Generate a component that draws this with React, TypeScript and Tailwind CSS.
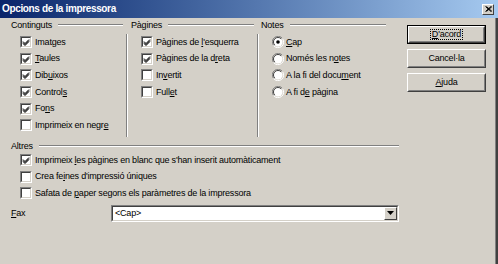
import type { ReactNode } from 'react';

const U = ({ children }: { children: ReactNode }) => <span className="underline underline-offset-[1px]">{children}</span>;

function Box({ checked }: { checked?: boolean }) {
  return (
    <span className="w-[12px] h-[12px] shrink-0 border border-t-[#808080] border-l-[#808080] border-b-white border-r-white">
      <span className="block w-full h-full bg-white border border-t-[#404040] border-l-[#404040] border-b-[#d4d0c8] border-r-[#d4d0c8]">
        {checked && (
          <svg viewBox="0 0 8 8" className="w-[8px] h-[8px]">
            <path d="M1 3.5 L3 5.5 L7 1.5 M1 4.5 L3 6.5 L7 2.5 M1 5.5 L3 7.5 L7 3.5" stroke="#000" strokeWidth="1" fill="none" />
          </svg>
        )}
      </span>
    </span>
  );
}

function Radio({ checked }: { checked?: boolean }) {
  return (
    <svg viewBox="0 0 12 12" className="w-[12px] h-[12px] shrink-0">
      <path d="M10.5 2.5 A5.5 5.5 0 0 0 1.5 9.5" stroke="#808080" fill="none" />
      <path d="M1.5 9.5 A5.5 5.5 0 0 0 10.5 2.5" stroke="#ffffff" fill="none" />
      <circle cx="6" cy="6" r="4.5" fill="#fff" />
      <path d="M9.2 2.8 A4.5 4.5 0 0 0 2.8 9.2" stroke="#404040" fill="none" />
      {checked && <circle cx="6" cy="6" r="1.8" fill="#000" />}
    </svg>
  );
}

function Check({ checked, children }: { checked?: boolean; children: ReactNode }) {
  return (
    <div className="h-[16.6px] flex items-center gap-[3px]">
      <Box checked={checked} />
      <span>{children}</span>
    </div>
  );
}

function Opt({ checked, children }: { checked?: boolean; children: ReactNode }) {
  return (
    <div className="h-[16.6px] flex items-center gap-[2px]">
      <Radio checked={checked} />
      <span>{children}</span>
    </div>
  );
}

function Header({ label }: { label: string }) {
  return (
    <div className="h-[12px] flex items-center gap-[6px]">
      <span>{label}</span>
      <span className="flex-1 h-[2px] border-t border-t-[#808080] border-b border-b-white" />
    </div>
  );
}

function Btn({ children, focus }: { children: ReactNode; focus?: boolean }) {
  return (
    <div className={`w-[79px] h-[19px] ${focus ? 'border border-black' : ''}`}>
      <div className="w-full h-full border border-t-white border-l-white border-b-[#404040] border-r-[#404040] bg-[#d4d0c8]">
        <div className="w-full h-full border border-t-[#d4d0c8] border-l-[#d4d0c8] border-b-[#808080] border-r-[#808080] flex items-center justify-center">
          <span className={focus ? 'outline outline-1 outline-dotted outline-black px-[1px]' : ''}>{children}</span>
        </div>
      </div>
    </div>
  );
}

export default function App() {
  return (
    <div className="w-[498px] h-[264px] bg-[#d4d0c8] flex flex-col overflow-hidden text-[9px] tracking-[-0.2px] text-black font-['Liberation_Sans',Arial,sans-serif] leading-none">
      <div className="h-[18px] shrink-0 bg-gradient-to-r from-[#0a246a] to-[#a6caf0] flex items-center pl-[2px] pr-[4px]">
        <span className="text-white font-bold text-[10px] tracking-[-0.35px]">Opcions de la impressora</span>
        <div className="ml-auto w-[12px] h-[11px] bg-[#d4d0c8] border border-t-white border-l-white border-b-[#404040] border-r-[#404040] flex items-center justify-center">
          <svg viewBox="0 0 7 6" className="w-[7px] h-[6px]">
            <path d="M0.5 0.5 L6 5.5 M1.5 0.5 L7 5.5 M6 0.5 L0.5 5.5 M7 0.5 L1.5 5.5" stroke="#000" strokeWidth="1" />
          </svg>
        </div>
      </div>

      <div className="flex-1 flex border-r-[2px] border-r-[#404040] shadow-[inset_-1px_0_0_#808080]">
        <div className="w-[399px] pt-[1px]">
          <div className="flex">
            <div className="w-[126px] pl-[11px] pr-[3px]">
              <Header label="Continguts" />
              <div className="pl-[9px] pt-[3px]">
                <Check checked>Imatges</Check>
                <Check checked><U>T</U>aules</Check>
                <Check checked>Dib<U>u</U>ixos</Check>
                <Check checked>Control<U>s</U></Check>
                <Check checked>Fo<U>n</U>s</Check>
                <Check>Imprimeix en negr<U>e</U></Check>
              </div>
            </div>
            <div className="w-[131px]">
              <div className="pl-[5px] pr-[3px]">
                <Header label="Pàgines" />
              </div>
              <div className="mt-[3px] h-[103px] border-l border-l-[#808080] shadow-[inset_1px_0_0_#fff] pl-[14px]">
                <Check checked>Pàgines de <U>l</U>'esquerra</Check>
                <Check checked>Pàgines de la d<U>r</U>eta</Check>
                <Check>In<U>v</U>ertit</Check>
                <Check>Full<U>e</U>t</Check>
              </div>
            </div>
            <div className="w-[131px]">
              <div className="pl-[4px] pr-[2px]">
                <Header label="Notes" />
              </div>
              <div className="mt-[3px] h-[103px] border-l border-l-[#808080] shadow-[inset_1px_0_0_#fff] pl-[14px]">
                <Opt checked><U>C</U>ap</Opt>
                <Opt>Només les n<U>o</U>tes</Opt>
                <Opt>A la fi del docu<U>m</U>ent</Opt>
                <Opt>A fi d<U>e</U> pàgina</Opt>
              </div>
            </div>
          </div>

          <div className="pl-[11px] mt-[3px]">
            <Header label="Altres" />
            <div className="pl-[9px]">
              <Check checked>Imprimeix <U>l</U>es pàgines en blanc que s'han inserit automàticament</Check>
              <Check>Crea fe<U>i</U>nes d'impressió úniques</Check>
              <Check>Safata de <U>p</U>aper segons els paràmetres de la impressora</Check>
            </div>
            <div className="flex items-center mt-[3px] h-[17px]">
              <span className="w-[100px]"><U>F</U>ax</span>
              <div className="w-[288px] h-[17px] border border-t-[#808080] border-l-[#808080] border-b-white border-r-white">
                <div className="w-full h-full bg-white border border-t-[#404040] border-l-[#404040] border-b-[#d4d0c8] border-r-[#d4d0c8] flex items-center">
                  <span className="pl-[2px]">&lt;Cap&gt;</span>
                  <div className="ml-auto w-[13px] h-full bg-[#d4d0c8] border border-t-white border-l-white border-b-[#404040] border-r-[#404040] flex items-center justify-center">
                    <svg viewBox="0 0 7 4" className="w-[7px] h-[4px]">
                      <path d="M0 0 H7 L3.5 4 Z" fill="#000" />
                    </svg>
                  </div>
                </div>
              </div>
            </div>
          </div>
        </div>

        <div className="pl-[8px] pt-[7px] flex flex-col gap-[5px]">
          <Btn focus><U>D</U>'acord</Btn>
          <Btn>Cancel·la</Btn>
          <Btn><U>A</U>juda</Btn>
        </div>
      </div>
    </div>
  );
}
